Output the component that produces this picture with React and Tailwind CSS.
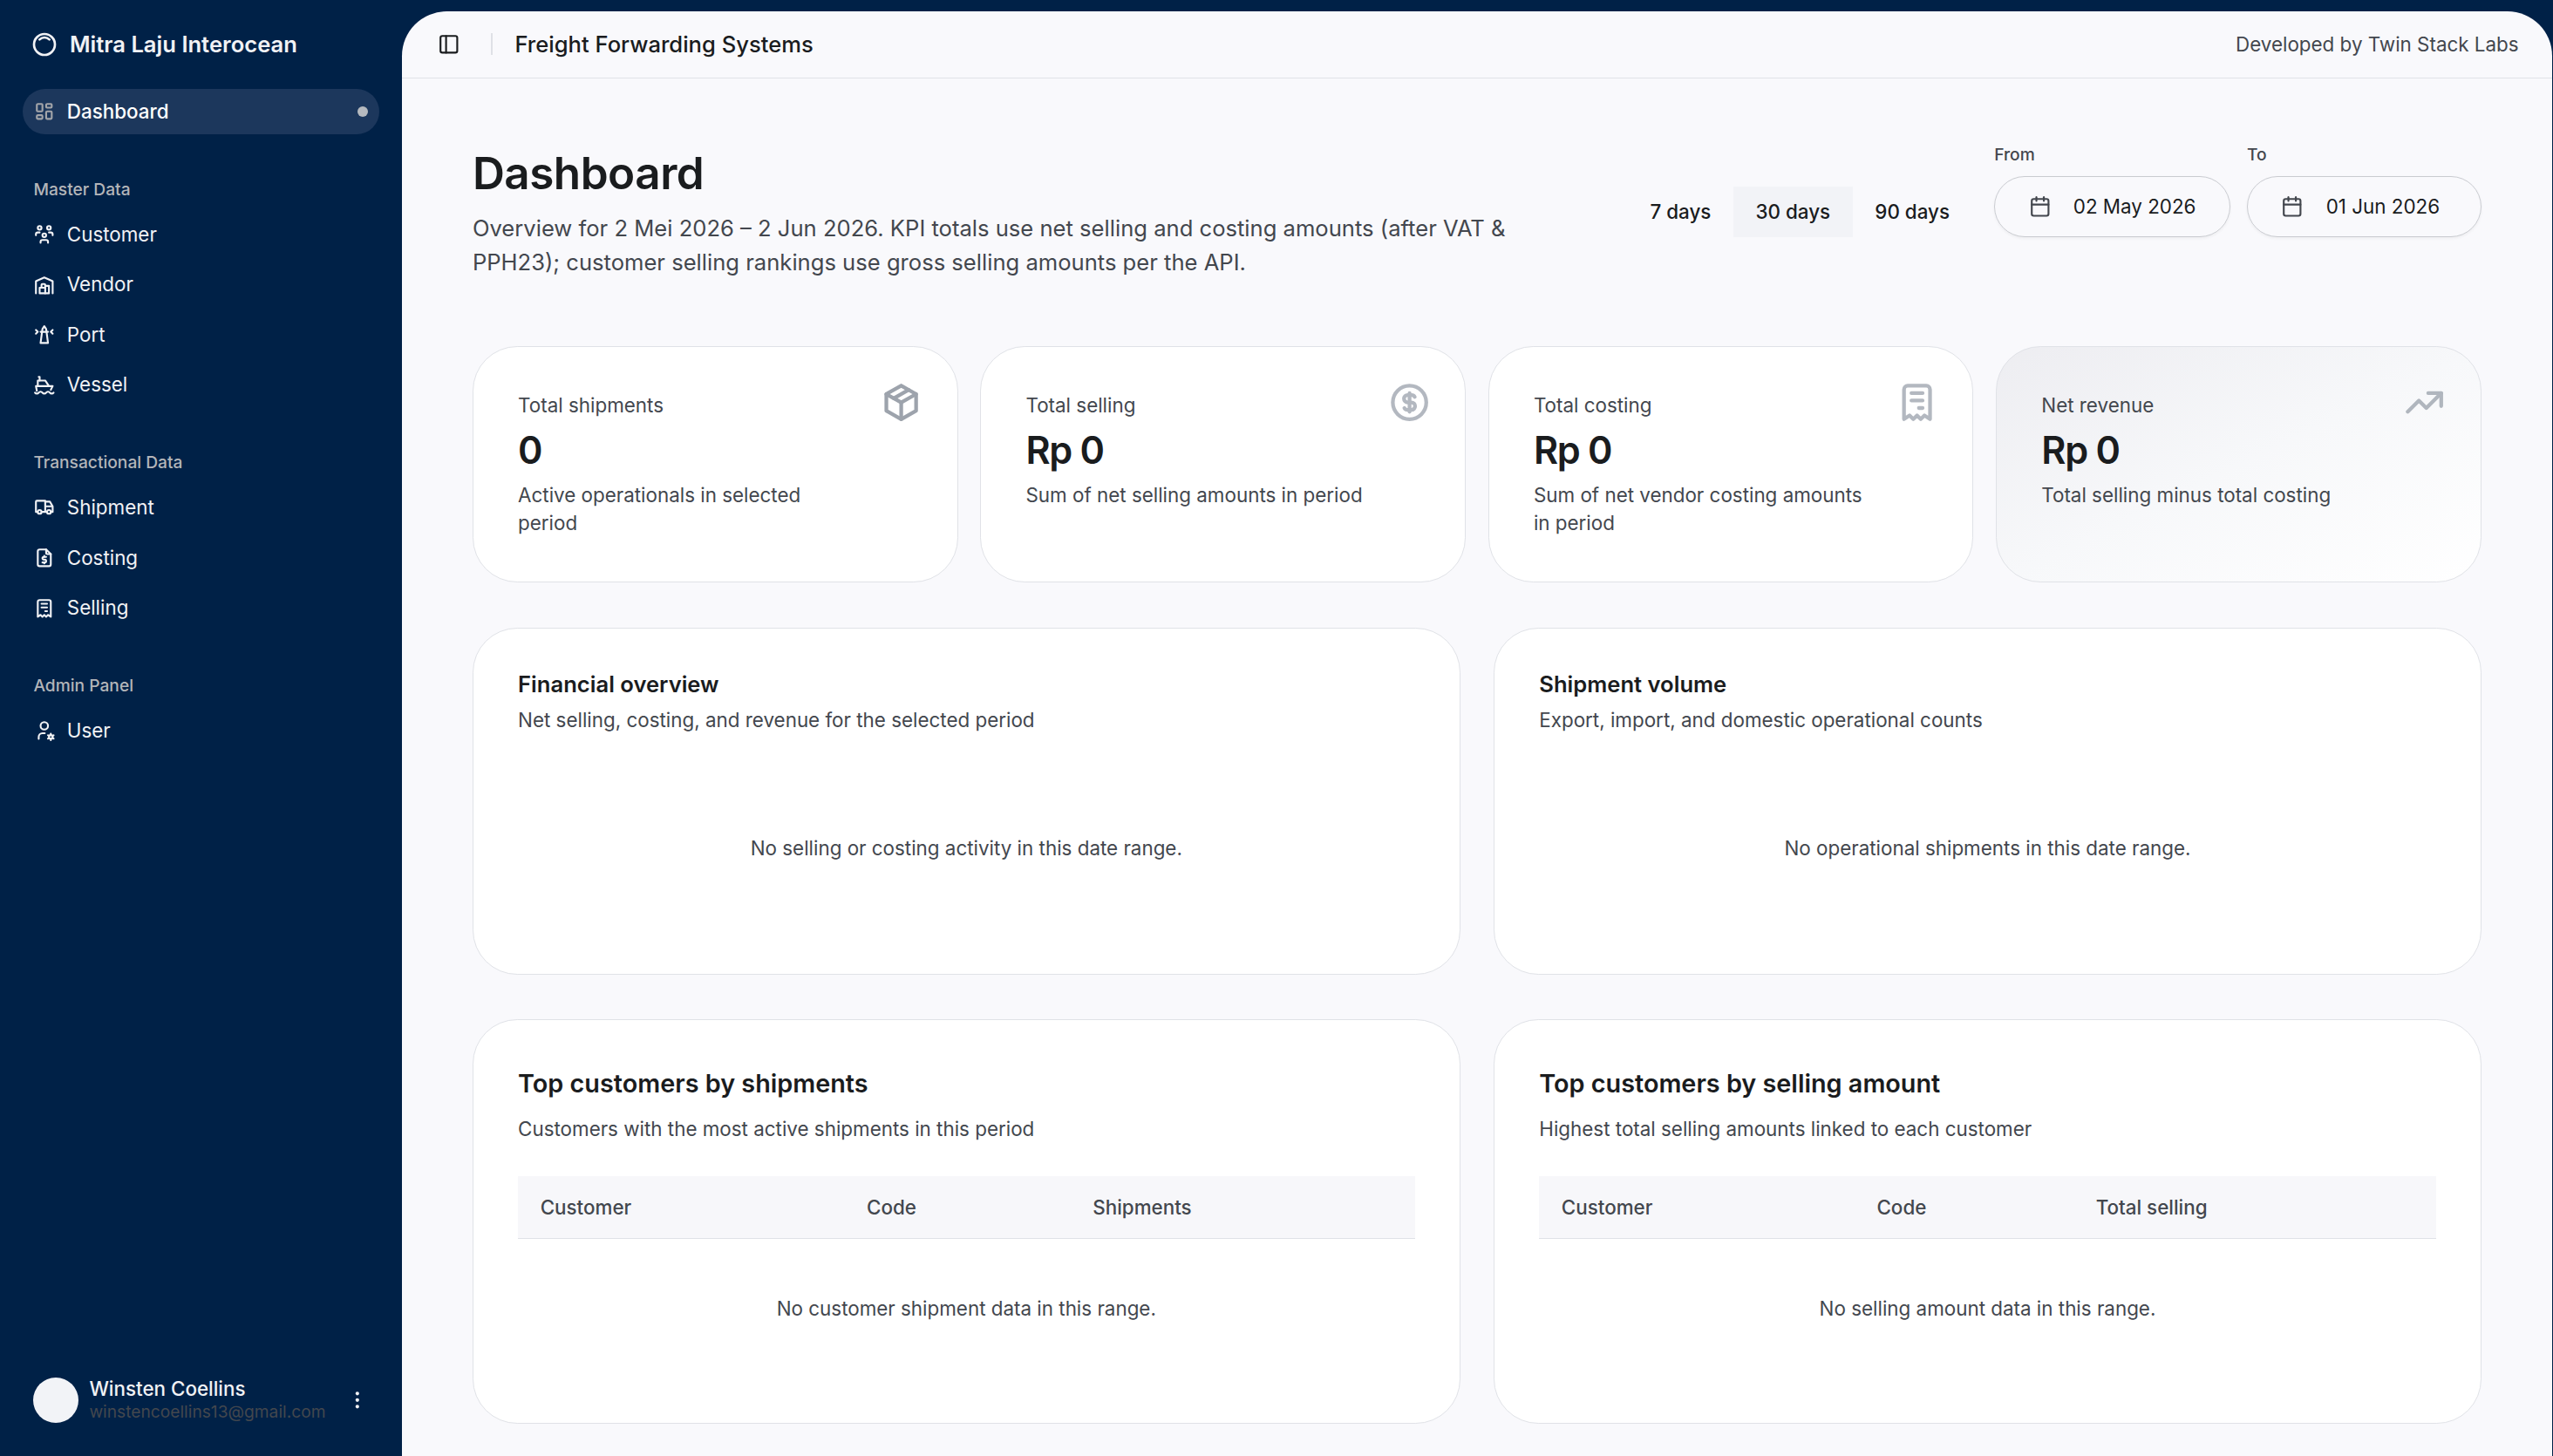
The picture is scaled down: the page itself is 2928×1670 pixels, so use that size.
import {
  TbBuildingLighthouse,
  TbBuildingWarehouse,
  TbCoin,
  TbDotsVertical,
  TbFileDollar,
  TbInnerShadowTop,
  TbLayoutDashboard,
  TbPackage,
  TbReceipt,
  TbShip,
  TbTrendingUp,
  TbTruck,
  TbUserCog,
  TbUsersGroup,
} from "react-icons/tb";
import { Calendar, PanelLeft } from "lucide-react";
import clsx from "clsx";

const navGroups = [
  {
    label: "Master Data",
    items: [
      { title: "Customer", icon: TbUsersGroup },
      { title: "Vendor", icon: TbBuildingWarehouse },
      { title: "Port", icon: TbBuildingLighthouse },
      { title: "Vessel", icon: TbShip },
    ],
  },
  {
    label: "Transactional Data",
    items: [
      { title: "Shipment", icon: TbTruck },
      { title: "Costing", icon: TbFileDollar },
      { title: "Selling", icon: TbReceipt },
    ],
  },
  {
    label: "Admin Panel",
    items: [{ title: "User", icon: TbUserCog }],
  },
];

const kpis = [
  {
    title: "Total shipments",
    value: "0",
    hint: "Active operationals in selected period",
    icon: TbPackage,
    iconClass: "text-[#9da3ac]",
  },
  {
    title: "Total selling",
    value: "Rp 0",
    hint: "Sum of net selling amounts in period",
    icon: TbCoin,
    iconClass: "text-[#b3b8c0]",
  },
  {
    title: "Total costing",
    value: "Rp 0",
    hint: "Sum of net vendor costing amounts in period",
    icon: TbReceipt,
    iconClass: "text-[#b3b8c0]",
  },
  {
    title: "Net revenue",
    value: "Rp 0",
    hint: "Total selling minus total costing",
    icon: TbTrendingUp,
    iconClass: "text-[#b0b6be]",
    highlight: true,
  },
];

function Sidebar() {
  return (
    <aside className="flex w-72 shrink-0 flex-col p-4 text-[#f1f2f5]">
      <div className="flex h-8 items-center gap-2 px-1.5">
        <TbInnerShadowTop className="size-5" />
        <span className="text-base font-semibold">Mitra Laju Interocean</span>
      </div>

      <nav className="mt-4 flex flex-col gap-6">
        <a className="flex h-8 items-center gap-2 rounded-full bg-[#1c375c] px-2 text-sm font-medium text-white">
          <TbLayoutDashboard className="size-4 text-[#a3a5a9]" />
          <span className="flex-1">Dashboard</span>
          <span className="size-2 rounded-full bg-[#b6babf]" />
        </a>

        {navGroups.map((group) => (
          <div key={group.label}>
            <div className="flex h-8 items-center px-2 text-xs font-medium text-[#b3b5b9]">{group.label}</div>
            <ul className="flex flex-col gap-1">
              {group.items.map(({ title, icon: Icon }) => (
                <li key={title} className="flex h-8 items-center gap-2 px-2 text-sm">
                  <Icon className="size-4" />
                  <span>{title}</span>
                </li>
              ))}
            </ul>
          </div>
        ))}
      </nav>

      <div className="mt-auto flex h-12 items-center gap-2 px-2">
        <div className="size-8 rounded-full bg-[#f2f3f7]" />
        <div className="grid flex-1 text-left text-sm leading-tight">
          <span className="font-medium">Winsten Coellins</span>
          <span className="text-xs text-[#43474e]">winstencoellins13@gmail.com</span>
        </div>
        <TbDotsVertical className="size-4" />
      </div>
    </aside>
  );
}

function Header() {
  return (
    <header className="flex h-12 shrink-0 items-center border-b border-[#e0e2e7] pr-6 pl-5">
      <button className="flex size-7 items-center justify-center">
        <PanelLeft className="size-4" />
      </button>
      <div className="mx-4 h-4 w-px bg-[#dfe1e6]" />
      <h1 className="text-base font-medium">Freight Forwarding Systems</h1>
      <span className="ml-auto text-sm text-[#43474e]">Developed by Twin Stack Labs</span>
    </header>
  );
}

function DateField({ label, value }) {
  return (
    <div className="flex flex-col gap-2">
      <span className="text-xs leading-[14px] font-medium text-[#43474e]">{label}</span>
      <button className="flex h-11 min-w-[168px] items-center gap-4 rounded-full border border-[#c9cbd0] px-6 text-sm shadow-xs">
        <Calendar className="size-4 text-[#43474e]" />
        {value}
      </button>
    </div>
  );
}

function PageHeader() {
  return (
    <div className="flex items-start justify-between">
      <div className="max-w-3xl">
        <h2 className="text-[32px] leading-10 font-semibold tracking-[-0.01em]">Dashboard</h2>
        <p className="mt-2 text-base text-[#43474e]">
          Overview for 2 Mei 2026 – 2 Jun 2026. KPI totals use net selling and costing amounts (after VAT &amp; PPH23);
          customer selling rankings use gross selling amounts per the API.
        </p>
      </div>
      <div className="flex items-end gap-4">
        <div className="flex text-sm font-medium">
          {["7 days", "30 days", "90 days"].map((range) => (
            <button key={range} className={clsx("h-9 px-4", range === "30 days" && "bg-[#f2f3f7]")}>
              {range}
            </button>
          ))}
        </div>
        <div className="flex gap-3">
          <DateField label="From" value="02 May 2026" />
          <DateField label="To" value="01 Jun 2026" />
        </div>
      </div>
    </div>
  );
}

function KpiCard({ title, value, hint, icon: Icon, iconClass, highlight }) {
  return (
    <div
      className={clsx(
        "relative flex flex-col gap-1 rounded-[32px] border border-[#e0e2e7] p-8",
        highlight ? "bg-linear-to-br from-[#ededf1] via-[#f7f8fa] to-white" : "bg-white"
      )}
    >
      <p className="text-sm text-[#43474e]">{title}</p>
      <p className="text-[27px] leading-[36.5px] font-semibold tracking-[-0.03em]">{value}</p>
      <p className="pr-10 text-sm text-[#43474e]">{hint}</p>
      <Icon className={clsx("absolute top-6 right-6 size-8", iconClass)} />
    </div>
  );
}

function ChartCard({ title, description, empty }) {
  return (
    <div className="flex h-[249px] flex-col rounded-[32px] border border-[#e0e2e7] bg-white p-8">
      <h3 className="text-base leading-none font-semibold">{title}</h3>
      <p className="mt-2 text-sm text-[#43474e]">{description}</p>
      <div className="mt-6 flex flex-1 items-center justify-center text-sm text-[#43474e]">{empty}</div>
    </div>
  );
}

function TableCard({ title, description, columns, gridClass, empty }) {
  return (
    <div className="rounded-[32px] border border-[#e0e2e7] bg-white p-8">
      <h3 className="text-lg leading-7 font-semibold">{title}</h3>
      <p className="mt-2 text-sm text-[#43474e]">{description}</p>
      <div className={clsx("mt-6 grid h-[45px] items-center border-b border-[#e0e2e7] bg-[#f7f7fa]", gridClass)}>
        {columns.map((column) => (
          <div key={column} className="px-4 text-sm font-medium text-[#43474e]">
            {column}
          </div>
        ))}
      </div>
      <div className="flex h-[99.5px] items-center justify-center text-sm text-[#43474e]">{empty}</div>
    </div>
  );
}

export default function App() {
  return (
    <div className="flex h-[1043.75px] w-[1830px] overflow-hidden bg-[#002147] font-['Inter',sans-serif] text-[#1a1c1e] [zoom:1.6]">
      <Sidebar />
      <main className="mt-2 mr-[0.625px] flex flex-1 flex-col overflow-hidden rounded-t-[32px] bg-[#f9f9fc]">
        <Header />
        <div className="mx-auto flex w-[1440px] flex-col pt-12">
          <PageHeader />
          <div className="mt-12 grid grid-cols-4 gap-4">
            {kpis.map((kpi) => (
              <KpiCard key={kpi.title} {...kpi} />
            ))}
          </div>
          <div className="mt-8 grid grid-cols-2 gap-6">
            <ChartCard
              title="Financial overview"
              description="Net selling, costing, and revenue for the selected period"
              empty="No selling or costing activity in this date range."
            />
            <ChartCard
              title="Shipment volume"
              description="Export, import, and domestic operational counts"
              empty="No operational shipments in this date range."
            />
          </div>
          <div className="mt-8 grid grid-cols-2 gap-6">
            <TableCard
              title="Top customers by shipments"
              description="Customers with the most active shipments in this period"
              columns={["Customer", "Code", "Shipments"]}
              gridClass="grid-cols-[234px_162px_1fr]"
              empty="No customer shipment data in this range."
            />
            <TableCard
              title="Top customers by selling amount"
              description="Highest total selling amounts linked to each customer"
              columns={["Customer", "Code", "Total selling"]}
              gridClass="grid-cols-[226px_157px_1fr]"
              empty="No selling amount data in this range."
            />
          </div>
        </div>
      </main>
    </div>
  );
}
